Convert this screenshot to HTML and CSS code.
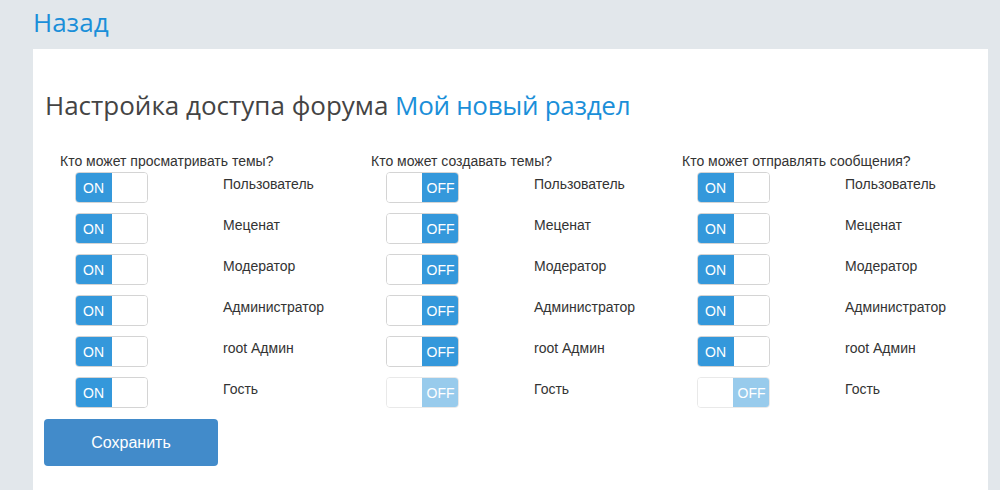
FILE: index.html
```html
<!DOCTYPE html>
<html lang="ru">
<head>
<meta charset="utf-8">
<link rel="stylesheet" href="styles.css">
</head>
<body>
<div class="top"><a class="back" href="#">Назад</a></div>
<div class="panel">
  <h1 class="title">Настройка доступа форума <span class="accent">Мой новый раздел</span></h1>
  <div class="cols">
    <div class="col">
      <div class="col-title">Кто может просматривать темы?</div>
      <div class="row"><span class="tgl on"><span class="knob">ON</span><span class="blank"></span></span><span class="role">Пользователь</span></div>
      <div class="row"><span class="tgl on"><span class="knob">ON</span><span class="blank"></span></span><span class="role">Меценат</span></div>
      <div class="row"><span class="tgl on"><span class="knob">ON</span><span class="blank"></span></span><span class="role">Модератор</span></div>
      <div class="row"><span class="tgl on"><span class="knob">ON</span><span class="blank"></span></span><span class="role">Администратор</span></div>
      <div class="row"><span class="tgl on"><span class="knob">ON</span><span class="blank"></span></span><span class="role">root Админ</span></div>
      <div class="row"><span class="tgl on"><span class="knob">ON</span><span class="blank"></span></span><span class="role">Гость</span></div>
    </div>
    <div class="col">
      <div class="col-title">Кто может создавать темы?</div>
      <div class="row"><span class="tgl off"><span class="blank"></span><span class="knob">OFF</span></span><span class="role">Пользователь</span></div>
      <div class="row"><span class="tgl off"><span class="blank"></span><span class="knob">OFF</span></span><span class="role">Меценат</span></div>
      <div class="row"><span class="tgl off"><span class="blank"></span><span class="knob">OFF</span></span><span class="role">Модератор</span></div>
      <div class="row"><span class="tgl off"><span class="blank"></span><span class="knob">OFF</span></span><span class="role">Администратор</span></div>
      <div class="row"><span class="tgl off"><span class="blank"></span><span class="knob">OFF</span></span><span class="role">root Админ</span></div>
      <div class="row"><span class="tgl off disabled"><span class="blank"></span><span class="knob">OFF</span></span><span class="role">Гость</span></div>
    </div>
    <div class="col">
      <div class="col-title">Кто может отправлять сообщения?</div>
      <div class="row"><span class="tgl on"><span class="knob">ON</span><span class="blank"></span></span><span class="role">Пользователь</span></div>
      <div class="row"><span class="tgl on"><span class="knob">ON</span><span class="blank"></span></span><span class="role">Меценат</span></div>
      <div class="row"><span class="tgl on"><span class="knob">ON</span><span class="blank"></span></span><span class="role">Модератор</span></div>
      <div class="row"><span class="tgl on"><span class="knob">ON</span><span class="blank"></span></span><span class="role">Администратор</span></div>
      <div class="row"><span class="tgl on"><span class="knob">ON</span><span class="blank"></span></span><span class="role">root Админ</span></div>
      <div class="row"><span class="tgl off disabled"><span class="blank"></span><span class="knob">OFF</span></span><span class="role">Гость</span></div>
    </div>
  </div>
  <button class="save" type="button">Сохранить</button>
</div>
</body>
</html>
```
FILE: styles.css
```css
html, body {
  margin: 0;
  padding: 0;
  height: 100%;
  overflow: hidden;
}
body {
  background: #e2e7eb;
  font-family: "Liberation Sans", Arial, sans-serif;
  color: #333;
}
.top {
  height: 49px;
  padding-left: 33px;
  box-sizing: border-box;
  padding-top: 5px;
}
.back {
  font-family: "Open Sans", "Liberation Sans", sans-serif;
  font-size: 26px;
  line-height: 34px;
  color: #1a8fd9;
  text-decoration: none;
}
.panel {
  margin-left: 33px;
  width: 955px;
  height: 441px;
  background: #fff;
  box-sizing: border-box;
  padding: 38px 12px 0 12px;
}
.title {
  margin: 0;
  font-family: "Open Sans", "Liberation Sans", sans-serif;
  font-weight: 400;
  font-size: 26px;
  line-height: 36px;
  color: #444;
}
.accent {
  color: #1a8fd9;
  letter-spacing: -0.3px;
}
.cols {
  display: grid;
  grid-template-columns: 311px 311px 311px;
  margin-top: 29px;
  padding-left: 15px;
}
.col-title {
  font-size: 14px;
  line-height: 18px;
  color: #333;
  margin-bottom: 2px;
}
.row {
  display: flex;
  align-items: flex-start;
  padding-left: 15px;
  height: 31px;
  margin-bottom: 10px;
}
.tgl {
  display: flex;
  width: 73px;
  height: 31px;
  box-sizing: border-box;
  border: 1px solid #d4d4d4;
  border-radius: 4px;
  overflow: hidden;
  flex: none;
}
.knob {
  background: #3498db;
  color: #fff;
  font-size: 14px;
  display: flex;
  align-items: center;
  justify-content: center;
}
.on .knob {
  margin: -1px 0 -1px -1px;
  width: 37px;
}
.off .knob {
  margin: -1px -1px -1px 0;
  width: 37px;
}
.blank {
  flex: 1;
  background: #fff;
}
.disabled {
  opacity: 0.5;
}
.role {
  margin-left: 75px;
  font-size: 14px;
  line-height: 18px;
  padding-top: 3px;
  color: #333;
}
.save {
  display: block;
  margin: 1px 0 0 -1px;
  width: 174px;
  height: 47px;
  border: none;
  border-radius: 4px;
  background: #428bca;
  color: #fff;
  font-family: "Liberation Sans", Arial, sans-serif;
  font-size: 16px;
  padding: 0;
}
```
